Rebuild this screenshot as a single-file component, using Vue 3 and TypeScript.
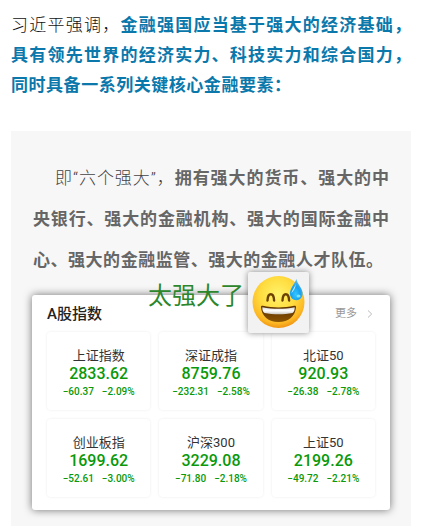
<script setup lang="ts">
interface IndexQuote {
  name: string
  value: string
  change: string
  percent: string
}

const quotes: IndexQuote[] = [
  { name: '上证指数', value: '2833.62', change: '−60.37', percent: '−2.09%' },
  { name: '深证成指', value: '8759.76', change: '−232.31', percent: '−2.58%' },
  { name: '北证50', value: '920.93', change: '−26.38', percent: '−2.78%' },
  { name: '创业板指', value: '1699.62', change: '−52.61', percent: '−3.00%' },
  { name: '沪深300', value: '3229.08', change: '−71.80', percent: '−2.18%' },
  { name: '上证50', value: '2199.26', change: '−49.72', percent: '−2.21%' },
]
</script>

<template>
  <main class="article">
    <p class="lead">
      <span class="line">习近平强调，<strong>金融强国应当基于强大的经济基础，</strong></span>
      <strong class="line">具有领先世界的经济实力、科技实力和综合国力，</strong>
      <strong class="line last">同时具备一系列关键核心金融要素：</strong>
    </p>

    <section class="quote">
      <p class="body">
        <span class="line first">即“六个强大”，<strong>拥有强大的货币、强大的中</strong></span>
        <strong class="line">央银行、强大的金融机构、强大的国际金融中</strong>
        <strong class="line last">心、强大的金融监管、强大的金融人才队伍。</strong>
      </p>

      <section class="card">
        <header class="head">
          <h2 class="title">A股指数</h2>
          <a class="more" href="#">
            更多
            <svg class="chevron" viewBox="0 0 6 10" aria-hidden="true"><path d="M1 1.5 4.7 5 1 8.5" /></svg>
          </a>
        </header>
        <ul class="grid">
          <li v-for="q in quotes" :key="q.name" class="tile">
            <span class="name">{{ q.name }}</span>
            <span class="value">{{ q.value }}</span>
            <span class="delta"><span>{{ q.change }}</span><span>{{ q.percent }}</span></span>
          </li>
        </ul>

        <div class="remark">
          <span class="shout">太强大了</span>
          <span class="sticker">
            <svg viewBox="0 0 61 61" aria-hidden="true">
              <defs>
                <radialGradient id="face" cx="0.48" cy="0.36" r="0.66">
                  <stop offset="0" stop-color="#fff36b" />
                  <stop offset="0.5" stop-color="#ffdc3f" />
                  <stop offset="0.82" stop-color="#fdb924" />
                  <stop offset="1" stop-color="#ee8d10" />
                </radialGradient>
                <linearGradient id="mouth" x1="0" y1="0" x2="0" y2="1">
                  <stop offset="0" stop-color="#5b3100" />
                  <stop offset="1" stop-color="#8a5200" />
                </linearGradient>
                <linearGradient id="teeth" x1="0" y1="0" x2="0" y2="1">
                  <stop offset="0" stop-color="#d9d9da" />
                  <stop offset="0.5" stop-color="#ffffff" />
                  <stop offset="1" stop-color="#c9c5c0" />
                </linearGradient>
                <radialGradient id="drop" cx="0.45" cy="0.72" r="0.65">
                  <stop offset="0" stop-color="#35c5ff" />
                  <stop offset="0.55" stop-color="#16a0ef" />
                  <stop offset="1" stop-color="#5fb9e8" />
                </radialGradient>
              </defs>
              <circle cx="30.5" cy="30" r="26" fill="url(#face)" />
              <path d="M19.500 28.500c.2-4.200 1.400-6.200 3.300-6.200s3.100 2 3.300 6.200" class="eye" />
              <path d="M34.500 28.500c.2-4.200 1.400-6.200 3.300-6.200s3.100 2 3.300 6.200" class="eye" />
              <path d="M13 35c0-1 .8-1.400 1.800-1.200 10.200 2.200 21.200 2.200 31.400 0 1-.2 1.800.2 1.800 1.200C47.500 44 40.500 50 30.500 50S13.500 44 13 35Z" fill="url(#mouth)" />
              <path d="M14.300 35.300c10.500 2 21.900 2 32.400 0 .1 2.500-.7 4.700-2.200 5.600-8.500 1.800-19.500 1.800-28 0-1.500-.9-2.300-3.100-2.200-5.600Z" fill="url(#teeth)" />
              <path d="M48.500 7c.8 5.200 6.200 9 6.200 14.700a6.400 6.400 0 0 1-12.800.2C41.700 16.500 46.500 12 48.500 7Z" fill="url(#drop)" />
              <path d="M47.500 12c-.5 3.500-3.800 6-4 9.500 1.500-2.700 4.500-5 4-9.500Z" fill="#c6eeff" />
              <ellipse cx="50.500" cy="24" rx="2" ry="1.500" fill="#79e2ff" />
            </svg>
          </span>
        </div>
      </section>
    </section>
  </main>
</template>

<style>
body {
  margin: 0;
  background: #fff;
}
</style>

<style scoped>
.article {
  padding: 10px 13px 0 11px;
  font-family: Roboto, "Noto Sans CJK SC", sans-serif;
  color: #333;
}

p,
h2,
ul {
  margin: 0;
  padding: 0;
}

.line {
  display: block;
  text-align: justify;
  text-align-last: justify;
}

.lead {
  font-size: 17px;
  line-height: 30px;
  font-weight: 300;
  color: #111;
}

.lead strong {
  font-weight: 700;
  color: #0b78ab;
}

.lead .last {
  padding-right: 120px;
}

.quote {
  margin-top: 31px;
  padding: 27px 21px 16px;
  background: #f7f7f7;
}

.body {
  padding: 0 1px;
  font-size: 17px;
  line-height: 41px;
  font-weight: 300;
  color: #444;
}

.body strong {
  font-weight: 700;
  color: #666;
}

.body .first {
  padding-left: 22px;
}

.body .last {
  padding-right: 6px;
}

.card {
  position: relative;
  margin-top: 14px;
  padding: 0 15px 13px;
  border-radius: 3px;
  background: #fff;
  box-shadow: 0 0 8px rgba(0, 0, 0, 0.55);
}

.head {
  display: flex;
  align-items: center;
  justify-content: space-between;
  height: 37px;
}

.title {
  font-size: 15px;
  line-height: 20px;
  font-weight: 500;
  color: #222;
}

.more {
  display: flex;
  align-items: center;
  gap: 10px;
  font-size: 11px;
  line-height: 20px;
  color: #999;
  text-decoration: none;
}

.chevron {
  width: 6px;
  height: 10px;
  margin-right: 2px;
  fill: none;
  stroke: #bbb;
  stroke-width: 1;
}

.grid {
  display: grid;
  grid-template-columns: repeat(3, 1fr);
  gap: 9px;
  list-style: none;
}

.tile {
  display: flex;
  flex-direction: column;
  align-items: center;
  padding: 15px 0 9px;
  border-radius: 4px;
  box-shadow: 0 0 3px rgba(0, 0, 0, 0.08);
}

.name {
  font-size: 13px;
  line-height: 18px;
}

.value {
  font-size: 16px;
  line-height: 18px;
  font-weight: 500;
  color: #0a990a;
}

.delta {
  display: flex;
  gap: 8px;
  font-size: 10px;
  line-height: 18px;
  font-weight: 500;
  color: #0a990a;
}

.remark {
  position: absolute;
  top: -23px;
  left: 116px;
  display: flex;
  align-items: center;
  gap: 4px;
}

.shout {
  padding-bottom: 14px;
  font-size: 24px;
  line-height: 30px;
  color: #2c862c;
  white-space: nowrap;
}

.sticker {
  width: 61px;
  height: 61px;
  border-radius: 2px;
  background: #f2f2f2;
  box-shadow: 0 0 6px rgba(0, 0, 0, 0.45);
}

.sticker svg {
  display: block;
}

.eye {
  fill: none;
  stroke: #6b3f00;
  stroke-width: 2.4;
  stroke-linecap: round;
}
</style>
